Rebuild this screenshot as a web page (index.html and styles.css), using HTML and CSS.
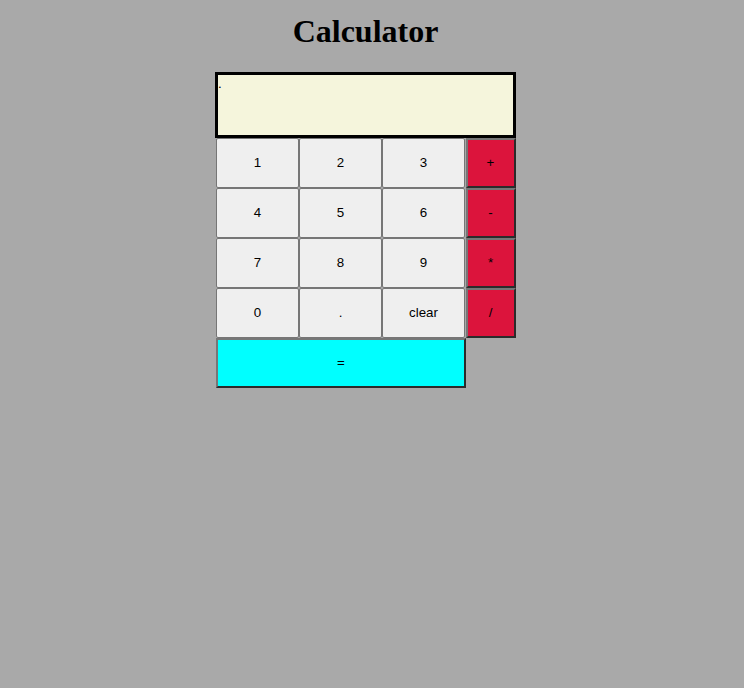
FILE: index.html
```html
<!DOCTYPE html>
<html>
<head>
<meta charset="utf-8">
<title>Calculator</title>
<link rel="stylesheet" href="styles.css">
</head>
<body>
<div class="page">
<h1 class="title">Calculator</h1>
<div class="calc">
  <div class="display"><span class="display-text">.</span></div>
  <div class="keys">
    <button class="key">1</button>
    <button class="key">2</button>
    <button class="key">3</button>
    <button class="key op">+</button>
    <button class="key">4</button>
    <button class="key">5</button>
    <button class="key">6</button>
    <button class="key op">-</button>
    <button class="key">7</button>
    <button class="key">8</button>
    <button class="key">9</button>
    <button class="key op">*</button>
    <button class="key">0</button>
    <button class="key">.</button>
    <button class="key">clear</button>
    <button class="key op">/</button>
    <button class="key equals">=</button>
  </div>
</div>
</div>
</body>
</html>
```
FILE: styles.css
```css
html, body {
  margin: 0;
  padding: 0;
}
body {
  background: #a9a9a9;
  font-family: "Liberation Serif", "Times New Roman", serif;
  padding-top: 13px;
}
.page {
  width: 731px;
}
.title {
  margin: 0 0 22px 0;
  text-align: center;
  font-size: 32px;
  font-weight: bold;
  color: #000;
  line-height: 37px;
}
.calc {
  width: 301px;
  margin: 0 auto;
}
.display {
  box-sizing: border-box;
  width: 301px;
  height: 66px;
  border: 3px solid #000;
  background: #f5f5dc;
  font-family: "Liberation Sans", Arial, sans-serif;
  font-size: 13.33px;
  line-height: 16px;
  padding: 1px 0 0 0;
  color: #000;
}
.keys {
  display: grid;
  grid-template-columns: 83px 83px 83px 51px;
  grid-auto-rows: 50px;
  margin-left: 1px;
}
.key {
  box-sizing: border-box;
  width: 83px;
  height: 50px;
  margin: 0;
  padding: 0 0 2px 0;
  background: #efefef;
  border: 1px solid #767676;
  border-radius: 2px;
  font-family: "Liberation Sans", Arial, sans-serif;
  font-size: 13.33px;
  color: #000;
}
.key.op {
  width: 50px;
  justify-self: end;
  padding: 0 1px 2px 0;
  background: #dc143c;
  border-radius: 0;
  border: 2px solid;
  border-color: #767676 #2b2b2b #2b2b2b #767676;
}
.key.equals {
  grid-column: 1 / 4;
  width: 250px;
  justify-self: start;
  background: #00ffff;
  border-radius: 0;
  border: 2px solid;
  border-color: #767676 #2b2b2b #2b2b2b #767676;
}
```
